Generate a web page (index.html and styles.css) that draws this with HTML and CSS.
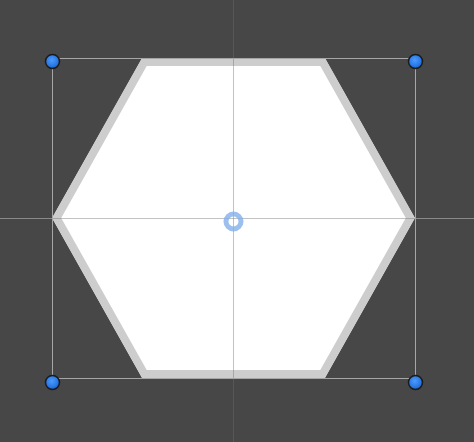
FILE: index.html
```html
<!DOCTYPE html>
<html>
<head>
<meta charset="utf-8">
<link rel="stylesheet" href="styles.css">
</head>
<body>
<div class="canvas">
<svg class="scene" width="474" height="442" viewBox="0 0 474 442">
  <defs>
    <clipPath id="hexclip">
      <polygon points="142,58 325,58 415,218 325,378 142,378 52,218"/>
    </clipPath>
    <radialGradient id="knob" cx="45%" cy="40%" r="60%">
      <stop offset="0" stop-color="#4a9cff"/>
      <stop offset="0.7" stop-color="#2a78e4"/>
      <stop offset="1" stop-color="#1a5ec4"/>
    </radialGradient>
    <filter id="soft" x="-50%" y="-50%" width="200%" height="200%">
      <feGaussianBlur stdDeviation="0.6"/>
    </filter>
  </defs>
  <line class="guide-v" x1="233.5" y1="0" x2="233.5" y2="442"/>
  <line class="guide-h" x1="0" y1="218.5" x2="474" y2="218.5"/>
  <polygon class="hex" clip-path="url(#hexclip)" points="142,58 325,58 415,218 325,378 142,378 52,218"/>
  <line class="guide-in" x1="233.5" y1="58" x2="233.5" y2="378"/>
  <line class="guide-in" x1="52" y1="218.5" x2="415" y2="218.5"/>
  <rect class="frame" x="52.5" y="58.5" width="363" height="320"/>
  <circle class="pivot" filter="url(#soft)" cx="233.5" cy="221.5" r="7.5"/>
  <circle class="handle" cx="52.5" cy="61.5" r="7"/>
  <circle class="handle" cx="415.5" cy="61.5" r="7"/>
  <circle class="handle" cx="52.5" cy="382.5" r="7"/>
  <circle class="handle" cx="415.5" cy="382.5" r="7"/>
</svg>
</div>
</body>
</html>
```
FILE: styles.css
```css
html, body {
  margin: 0;
  padding: 0;
  background: #474747;
  overflow: hidden;
}
.canvas {
  width: 474px;
  height: 442px;
  position: relative;
}
.scene {
  display: block;
}
.guide-v {
  stroke: #575757;
  stroke-width: 1;
}
.guide-h {
  stroke: #8a8a8a;
  stroke-width: 1;
}
.guide-in {
  stroke: rgba(120, 120, 120, 0.45);
  stroke-width: 1;
}
.hex {
  fill: #ffffff;
  stroke: #cdcdcd;
  stroke-width: 16;
}
.frame {
  fill: none;
  stroke: #a6a6a6;
  stroke-width: 1;
}
.pivot {
  fill: none;
  stroke: rgba(130, 175, 235, 0.8);
  stroke-width: 5;
}
.handle {
  fill: url(#knob);
  stroke: #1b1b1b;
  stroke-width: 1.5;
}
```
